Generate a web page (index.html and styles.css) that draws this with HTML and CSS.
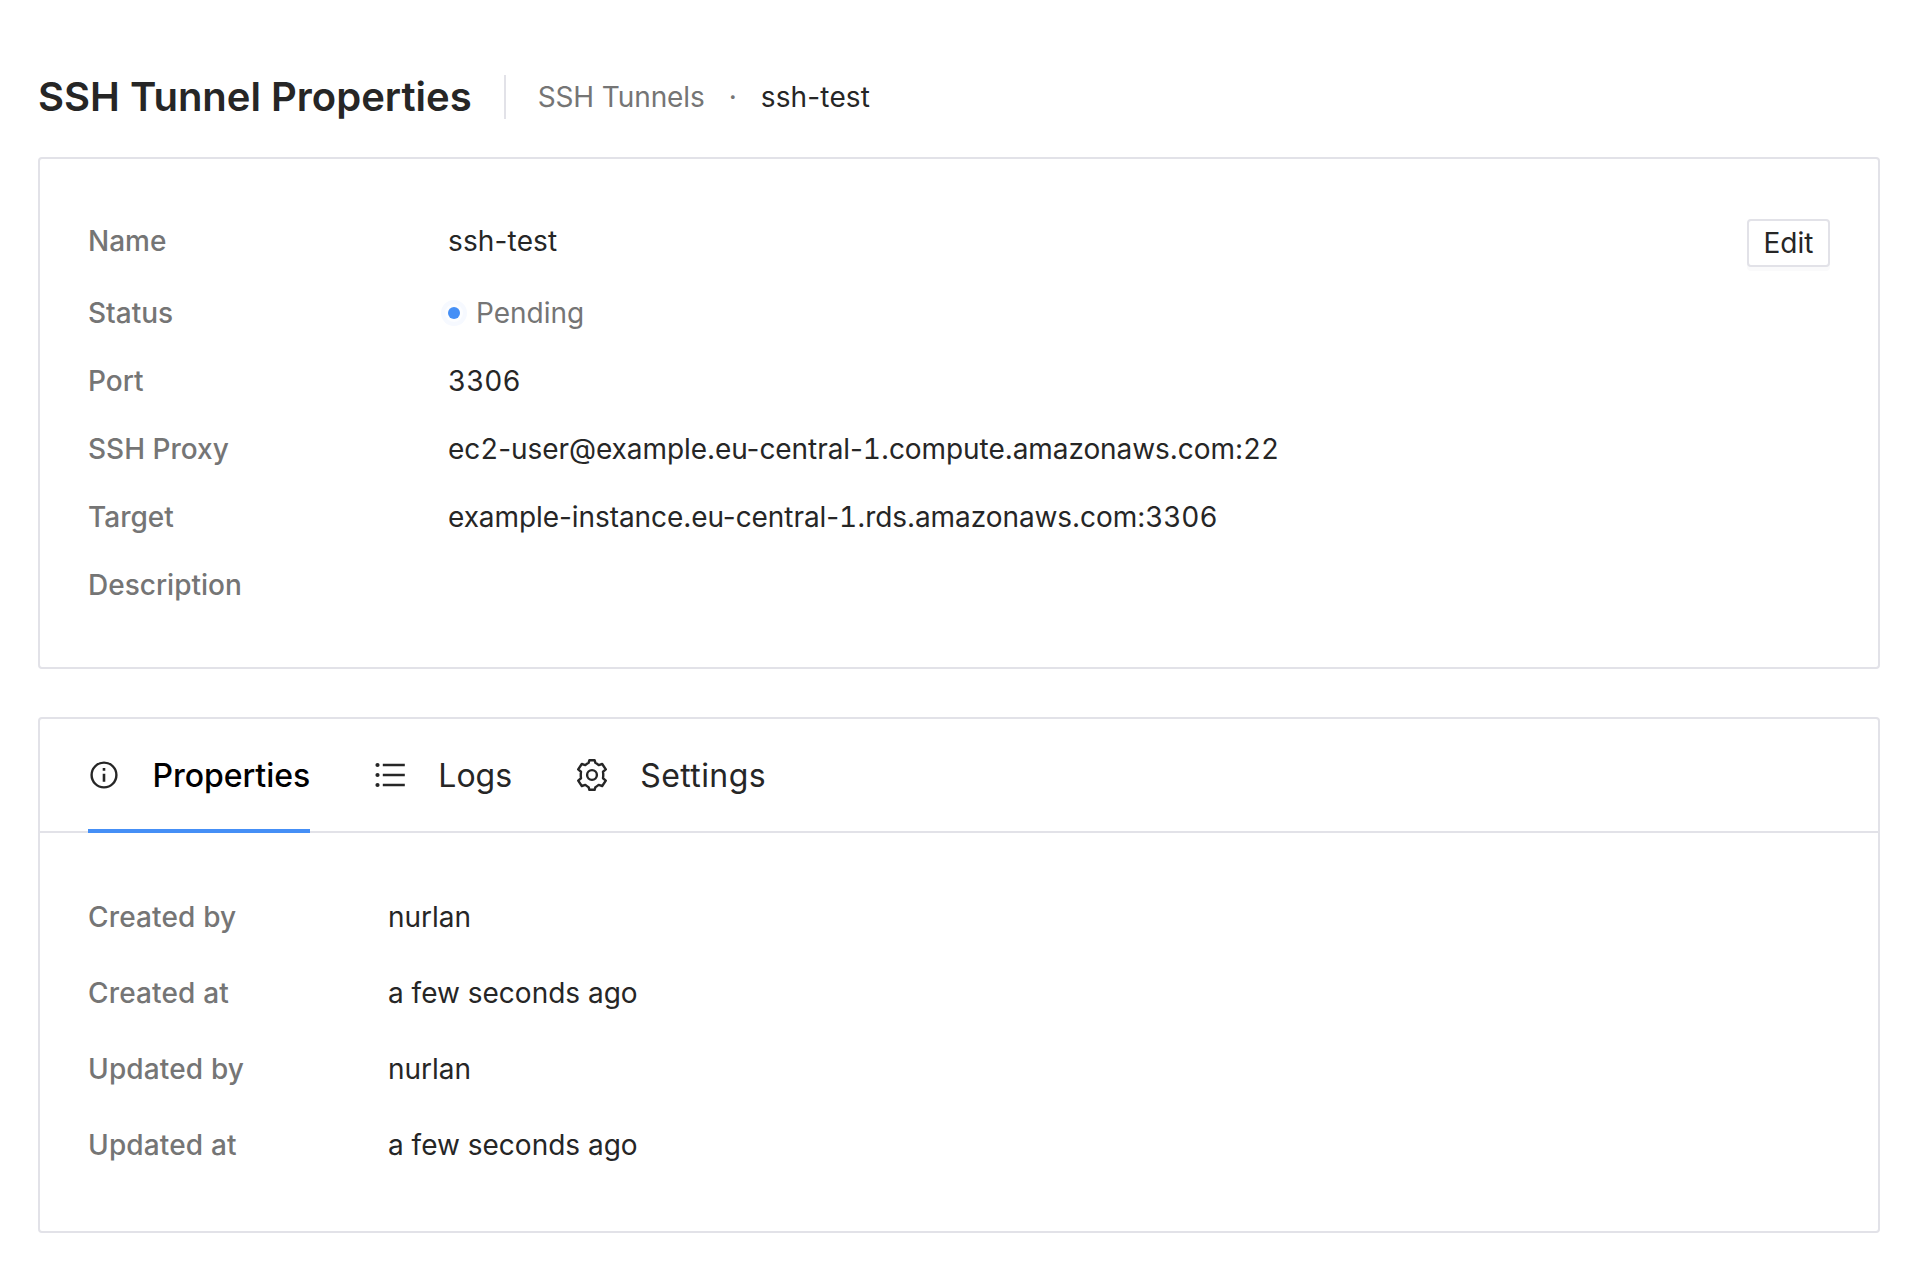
FILE: index.html
```html
<!DOCTYPE html>
<html lang="en">
<head>
<meta charset="utf-8">
<title>SSH Tunnel Properties</title>
<link rel="stylesheet" href="styles.css">
</head>
<body>
<header class="page-header">
  <h1 class="page-title">SSH Tunnel Properties</h1>
  <nav class="breadcrumb"><a class="crumb">SSH Tunnels</a><span class="dot">·</span><span class="current">ssh-test</span></nav>
</header>
<section class="card summary">
  <dl class="details">
    <div class="row first"><dt>Name</dt><dd class="current">ssh-test</dd></div>
    <div class="row"><dt>Status</dt><dd class="status"><i class="badge"></i>Pending</dd></div>
    <div class="row"><dt>Port</dt><dd><span class="num">3306</span></dd></div>
    <div class="row"><dt>SSH Proxy</dt><dd class="host">ec<span class="num">2</span>-user@example.eu-central-<span class="num">1</span>.compute.amazonaws.com:<span class="num">22</span></dd></div>
    <div class="row"><dt>Target</dt><dd class="host">example-instance.eu-central-<span class="num">1</span>.rds.amazonaws.com:<span class="num">3306</span></dd></div>
    <div class="row"><dt>Description</dt><dd></dd></div>
  </dl>
  <button class="edit">Edit</button>
</section>
<section class="card">
  <div class="tabs">
    <div class="tab active">
      <svg class="icon" viewBox="0 0 32 32"><circle cx="16" cy="16" r="12.4" fill="none" stroke="currentColor" stroke-width="2.4"/><path d="M14.700 14.700h2.600v8h-2.600zM14.700 9h2.600v2.800h-2.600z" fill="currentColor"/></svg>
      <span>Properties</span>
    </div>
    <div class="tab">
      <svg class="icon" viewBox="0 0 32 32"><path d="M8.800 6h22M8.800 16h22M8.800 26h22" stroke="currentColor" stroke-width="2.600"/><g fill="currentColor"><circle cx="3.500" cy="6" r="2.100"/><circle cx="3.500" cy="16" r="2.100"/><circle cx="3.500" cy="26" r="2.100"/></g></svg>
      <span>Logs</span>
    </div>
    <div class="tab">
      <svg class="icon" viewBox="-16 -16 32 32"><g fill="none" stroke="currentColor" stroke-width="2.400" stroke-linejoin="round"><path d="M-2.600-14.800H2.600L3.400-12.200Q5-11.300 6.700-9.900L10.200-11L13.800-5.600L11-3.300Q11.500 0 11 3.300L13.800 5.600L10.200 11L6.700 9.900Q5 11.300 3.400 12.200L2.600 14.800H-2.600L-3.400 12.200Q-5 11.300-6.700 9.900L-10.200 11L-13.800 5.600L-11 3.300Q-11.500 0-11-3.300L-13.800-5.600L-10.200-11L-6.700-9.900Q-5-11.300-3.400-12.200Z"/><circle r="4.900"/></g></svg>
      <span class="settings">Settings</span>
    </div>
  </div>
  <dl class="details meta">
    <div class="row"><dt>Created by</dt><dd>nurlan</dd></div>
    <div class="row"><dt>Created at</dt><dd>a few seconds ago</dd></div>
    <div class="row"><dt>Updated by</dt><dd>nurlan</dd></div>
    <div class="row"><dt>Updated at</dt><dd>a few seconds ago</dd></div>
  </dl>
</section>
</body>
</html>
```
FILE: styles.css
```css
* { box-sizing: border-box; }
body { margin: 0; padding: 75px 50px 0 38px; background: #fff; color: #262626; font: 28px/44px Inter, sans-serif; }
.page-header { display: flex; align-items: center; height: 44px; margin-bottom: 38px; }
.page-title { margin: 0; font-size: 40px; font-weight: 600; line-height: 44px; }
.breadcrumb { display: flex; align-items: center; height: 44px; margin-left: 32px; padding-left: 32px; border-left: 2px solid #e2e2e8; }
.crumb, .dot { color: #757575; }
.crumb { letter-spacing: -0.1px; }
.current { letter-spacing: 0.15px; }
.host { letter-spacing: -0.07px; }
.num { font-feature-settings: "tnum"; }
.dot { margin: 0 24px; }
.card { border: 2px solid #e2e2e8; border-radius: 4px; margin-bottom: 48px; }
.summary { display: flex; justify-content: space-between; align-items: flex-start; padding: 60px 48px; }
.details { margin: 0; }
.row { display: flex; margin-bottom: 24px; }
.row:last-child { margin-bottom: 0; }
.row.first { min-height: 48px; }
dt { width: 360px; font-weight: 500; color: #757575; }
dd { margin: 0; }
.status { display: flex; align-items: center; gap: 16px; color: #757575; }
.badge { width: 12px; height: 12px; border-radius: 50%; background: #458ff6; box-shadow: 0 0 0 3px #fcfdff, 0 0 0 7px #f6f9ff; }
.edit { width: 83px; height: 48px; padding: 0; border: 2px solid #e2e2e8; border-radius: 4px; background: #fff; box-shadow: 0 4px 0 #fafafb; color: #262626; font: 28px/44px Inter, sans-serif; }
.tabs { display: flex; gap: 63.6px; height: 114px; padding: 0 48px; border-bottom: 2px solid #e2e2e8; font-size: 32px; }
.tab { display: flex; align-items: center; gap: 32.6px; height: 114px; }
.tab.active { border-bottom: 4px solid #458ff6; padding-top: 4px; }
.tab.active span { color: #000; font-weight: 500; letter-spacing: -0.06px; }
.settings { letter-spacing: 0.4px; }
.icon { width: 32px; height: 32px; margin-top: -2px; }
.meta { padding: 62px 48px 64px; }
.meta .row { margin-bottom: 32px; }
.meta .row:last-child { margin-bottom: 0; }
.meta dt { width: 300px; letter-spacing: 0.15px; }
```
